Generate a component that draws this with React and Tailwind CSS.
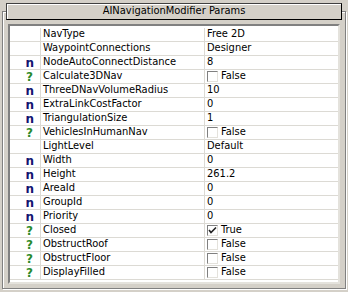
import React from "react";

const rows = [
  { icon: "", name: "NavType", value: "Free 2D" },
  { icon: "", name: "WaypointConnections", value: "Designer" },
  { icon: "n", name: "NodeAutoConnectDistance", value: "8" },
  { icon: "?", name: "Calculate3DNav", check: false },
  { icon: "n", name: "ThreeDNavVolumeRadius", value: "10" },
  { icon: "n", name: "ExtraLinkCostFactor", value: "0" },
  { icon: "n", name: "TriangulationSize", value: "1" },
  { icon: "?", name: "VehiclesInHumanNav", check: false },
  { icon: "", name: "LightLevel", value: "Default" },
  { icon: "n", name: "Width", value: "0" },
  { icon: "n", name: "Height", value: "261.2" },
  { icon: "n", name: "AreaId", value: "0" },
  { icon: "n", name: "GroupId", value: "0" },
  { icon: "n", name: "Priority", value: "0" },
  { icon: "?", name: "Closed", check: true },
  { icon: "?", name: "ObstructRoof", check: false },
  { icon: "?", name: "ObstructFloor", check: false },
  { icon: "?", name: "DisplayFilled", check: false },
];

const Checkbox = ({ checked }) => (
  <span className="w-[11px] h-[11px] bg-white border-t border-l border-t-[#808080] border-l-[#808080] border-b border-r border-b-[#e4e2dc] border-r-[#e4e2dc] flex items-center justify-center">
    {checked && (
      <svg width="9" height="9" viewBox="0 0 9 9">
        <path d="M1 4 L3 6.5 L8 1.5" stroke="#222" strokeWidth="1.6" fill="none" />
      </svg>
    )}
  </span>
);

const Icon = ({ type }) => {
  if (type === "n")
    return <span className="text-[#141470] font-bold text-[12px] leading-none font-['DejaVu_Sans',sans-serif]">n</span>;
  if (type === "?")
    return <span className="text-[#2a8a2a] font-bold text-[12px] leading-none font-['DejaVu_Sans',sans-serif] mr-[1px]">?</span>;
  return null;
};

export default function App() {
  return (
    <div className="w-[348px] h-[292px] bg-[#d4d0c8] pt-[3px] font-['DejaVu_Sans_Condensed','Liberation_Sans',sans-serif] text-[11px] text-black">
      {/* Title bar */}
      <div className="relative z-10 mx-[6px] h-[17px] bg-[#d4d0c8] border border-[#404040] border-b-black border-r-black flex items-center justify-center shadow-[inset_1px_1px_0_#ffffff]">
        AINavigationModifier Params
      </div>

      {/* Group box */}
      <div className="-mt-[9px] mx-[2px] h-[278px] border border-[#808080] shadow-[inset_1px_1px_0_#ffffff,1px_1px_0_#ffffff] pt-[12px] px-[5px]">
        {/* Grid */}
        <div className="h-[260px] bg-white border-2 border-t-[#808080] border-l-[#808080] border-b-[#e4e2dc] border-r-[#e4e2dc] pt-[2px]">
          {rows.map((r) => (
            <div key={r.name} className="flex h-[14px] border-b border-[#dcdad4]">
              <div className="w-[31px] flex items-center justify-end pr-[6px] border-r border-[#dcdad4]">
                <Icon type={r.icon} />
              </div>
              <div className="w-[164px] pl-[2px] flex items-center border-r border-[#dcdad4] whitespace-nowrap overflow-hidden">
                {r.name}
              </div>
              <div className="flex-1 pl-[2px] flex items-center gap-[3px]">
                {r.value !== undefined ? (
                  r.value
                ) : (
                  <>
                    <Checkbox checked={r.check} />
                    {r.check ? "True" : "False"}
                  </>
                )}
              </div>
            </div>
          ))}
        </div>
      </div>
    </div>
  );
}
